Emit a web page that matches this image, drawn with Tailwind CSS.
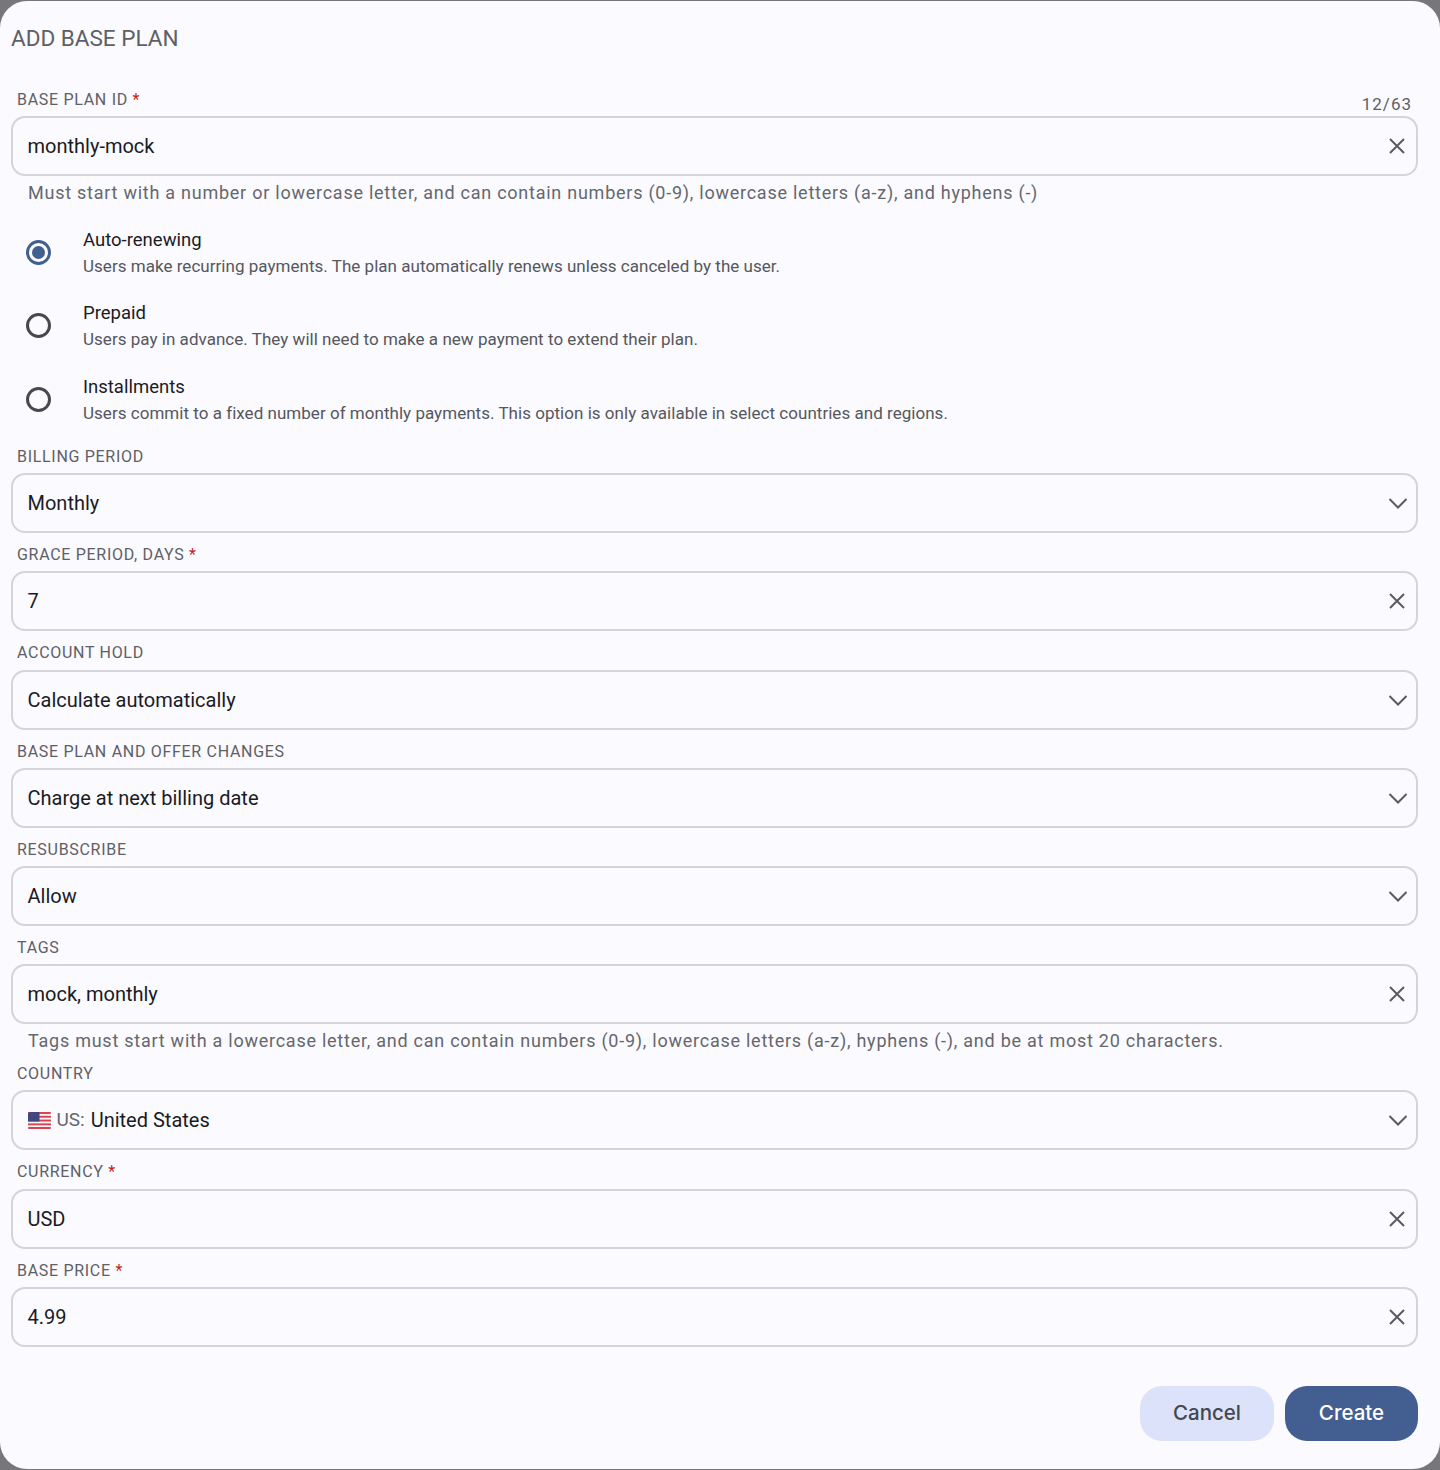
<!DOCTYPE html>
<html><head><meta charset="utf-8"><script src="https://cdn.jsdelivr.net/npm/@tailwindcss/browser@4"></script></head>
<body class="m-0 bg-[#77777b]">
<div class="w-[1440px] h-[1470px] pt-[1px] font-['Roboto',sans-serif]">
<div class="h-[1468px] bg-[#fafaff] rounded-[27px] pl-[11px] pr-[22px] flex flex-col">
  <div class="h-[72px] pt-[21px] text-[22.5px] leading-[32px] text-[#5f6065]">ADD BASE PLAN</div>

  <div class="h-[43px] flex items-end justify-between pl-[6px] pb-[6px] text-[16px] leading-[20px] tracking-[0.7px] text-[#5f6065]">
    <div>BASE PLAN ID <span class="text-[#c5221f]">*</span></div>
    <div class="pr-[6px] -mb-[4px] text-[17px] tracking-[1px]">12/63</div>
  </div>
  <div class="h-[60px] shrink-0 rounded-[14px] border-2 border-[#d3d4dc] pl-[14.5px] pr-[9px] flex items-center justify-between text-[20px] text-[#1b1b1f]">
    <span>monthly-mock</span>
    <svg class="w-[20px] h-[20px]" viewBox="0 0 20 20" fill="none" stroke="#5a5b60" stroke-width="2"><path d="M3 3l14 14M17 3L3 17"/></svg>
  </div>
  <div class="h-[33px] pl-[17px] pt-[5px] text-[18px] leading-[24px] tracking-[0.75px] text-[#66676c]">Must start with a number or lowercase letter, and can contain numbers (0-9), lowercase letters (a-z), and hyphens (-)</div>

  <div class="flex flex-col pt-[6.5px]">
    <div class="h-[73.5px] flex items-center pl-[15px]">
      <div class="w-[25px] h-[25px] rounded-full border-[3px] border-[#42608f] flex items-center justify-center shrink-0"><div class="w-[13px] h-[13px] rounded-full bg-[#42608f]"></div></div>
      <div class="ml-[32px]"><div class="text-[18.5px] leading-[28px] text-[#1b1b1f]">Auto-renewing</div><div class="text-[17px] leading-[25px] tracking-[0.03px] text-[#56575c]">Users make recurring payments. The plan automatically renews unless canceled by the user.</div></div>
    </div>
    <div class="h-[73.5px] flex items-center pl-[15px]">
      <div class="w-[25px] h-[25px] rounded-full border-[3px] border-[#47484d] shrink-0"></div>
      <div class="ml-[32px]"><div class="text-[18.5px] leading-[28px] text-[#1b1b1f]">Prepaid</div><div class="text-[17px] leading-[25px] tracking-[0.03px] text-[#56575c]">Users pay in advance. They will need to make a new payment to extend their plan.</div></div>
    </div>
    <div class="h-[73.5px] flex items-center pl-[15px]">
      <div class="w-[25px] h-[25px] rounded-full border-[3px] border-[#47484d] shrink-0"></div>
      <div class="ml-[32px]"><div class="text-[18.5px] leading-[28px] text-[#1b1b1f]">Installments</div><div class="text-[17px] leading-[25px] tracking-[0.03px] text-[#56575c]">Users commit to a fixed number of monthly payments. This option is only available in select countries and regions.</div></div>
    </div>
  </div>

  <div class="h-[37px] pl-[6px] pt-[11px] text-[16px] leading-[20px] tracking-[0.7px] text-[#5f6065]">BILLING PERIOD</div>
  <div class="h-[60px] shrink-0 rounded-[14px] border-2 border-[#d3d4dc] pl-[14.5px] pr-[8px] flex items-center justify-between text-[20px] text-[#1b1b1f]">
    <span>Monthly</span>
    <svg class="w-[20px] h-[12px]" viewBox="0 0 20 12" fill="none" stroke="#5a5b60" stroke-width="2"><path d="M1.5 2L10 10.5L18.5 2"/></svg>
  </div>

  <div class="h-[38.25px] pl-[6px] pt-[12px] text-[16px] leading-[20px] tracking-[0.7px] text-[#5f6065]">GRACE PERIOD, DAYS <span class="text-[#c5221f]">*</span></div>
  <div class="h-[60px] shrink-0 rounded-[14px] border-2 border-[#d3d4dc] pl-[14.5px] pr-[9px] flex items-center justify-between text-[20px] text-[#1b1b1f]">
    <span>7</span>
    <svg class="w-[20px] h-[20px]" viewBox="0 0 20 20" fill="none" stroke="#5a5b60" stroke-width="2"><path d="M3 3l14 14M17 3L3 17"/></svg>
  </div>

  <div class="h-[38.25px] pl-[6px] pt-[12px] text-[16px] leading-[20px] tracking-[0.7px] text-[#5f6065]">ACCOUNT HOLD</div>
  <div class="h-[60px] shrink-0 rounded-[14px] border-2 border-[#d3d4dc] pl-[14.5px] pr-[8px] flex items-center justify-between text-[20px] text-[#1b1b1f]">
    <span>Calculate automatically</span>
    <svg class="w-[20px] h-[12px]" viewBox="0 0 20 12" fill="none" stroke="#5a5b60" stroke-width="2"><path d="M1.5 2L10 10.5L18.5 2"/></svg>
  </div>

  <div class="h-[38.25px] pl-[6px] pt-[12px] text-[16px] leading-[20px] tracking-[0.7px] text-[#5f6065]">BASE PLAN AND OFFER CHANGES</div>
  <div class="h-[60px] shrink-0 rounded-[14px] border-2 border-[#d3d4dc] pl-[14.5px] pr-[8px] flex items-center justify-between text-[20px] text-[#1b1b1f]">
    <span>Charge at next billing date</span>
    <svg class="w-[20px] h-[12px]" viewBox="0 0 20 12" fill="none" stroke="#5a5b60" stroke-width="2"><path d="M1.5 2L10 10.5L18.5 2"/></svg>
  </div>

  <div class="h-[38.25px] pl-[6px] pt-[12px] text-[16px] leading-[20px] tracking-[0.7px] text-[#5f6065]">RESUBSCRIBE</div>
  <div class="h-[60px] shrink-0 rounded-[14px] border-2 border-[#d3d4dc] pl-[14.5px] pr-[8px] flex items-center justify-between text-[20px] text-[#1b1b1f]">
    <span>Allow</span>
    <svg class="w-[20px] h-[12px]" viewBox="0 0 20 12" fill="none" stroke="#5a5b60" stroke-width="2"><path d="M1.5 2L10 10.5L18.5 2"/></svg>
  </div>

  <div class="h-[38.25px] pl-[6px] pt-[12px] text-[16px] leading-[20px] tracking-[0.7px] text-[#5f6065]">TAGS</div>
  <div class="h-[60px] shrink-0 rounded-[14px] border-2 border-[#d3d4dc] pl-[14.5px] pr-[9px] flex items-center justify-between text-[20px] text-[#1b1b1f]">
    <span>mock, monthly</span>
    <svg class="w-[20px] h-[20px]" viewBox="0 0 20 20" fill="none" stroke="#5a5b60" stroke-width="2"><path d="M3 3l14 14M17 3L3 17"/></svg>
  </div>
  <div class="h-[33px] pl-[17px] pt-[5px] text-[18px] leading-[24px] tracking-[0.75px] text-[#66676c]">Tags must start with a lowercase letter, and can contain numbers (0-9), lowercase letters (a-z), hyphens (-), and be at most 20 characters.</div>

  <div class="h-[33px] pl-[6px] pt-[7px] text-[16px] leading-[20px] tracking-[0.7px] text-[#5f6065]">COUNTRY</div>
  <div class="h-[60px] shrink-0 rounded-[14px] border-2 border-[#d3d4dc] pl-[14.5px] pr-[8px] flex items-center justify-between text-[20px] text-[#1b1b1f]">
    <span class="flex items-center">
      <svg class="w-[23px] h-[17px] mr-[6px]" viewBox="0 0 23 17"><rect width="23" height="17" rx="2" fill="#f4f4f8"/><g fill="#d9434f"><rect width="23" height="1.9" rx="1"/><rect y="3.8" width="23" height="1.9"/><rect y="7.6" width="23" height="1.9"/><rect y="11.4" width="23" height="1.9"/><rect y="15.1" width="23" height="1.9" rx="1"/></g><path d="M2 0h9.5v9.5H0V2a2 2 0 0 1 2-2z" fill="#43477f"/></svg>
      <span class="text-[#66676c] text-[19px] mr-[6px]">US:</span>United States</span>
    <svg class="w-[20px] h-[12px]" viewBox="0 0 20 12" fill="none" stroke="#5a5b60" stroke-width="2"><path d="M1.5 2L10 10.5L18.5 2"/></svg>
  </div>

  <div class="h-[38.25px] pl-[6px] pt-[12px] text-[16px] leading-[20px] tracking-[0.7px] text-[#5f6065]">CURRENCY <span class="text-[#c5221f]">*</span></div>
  <div class="h-[60px] shrink-0 rounded-[14px] border-2 border-[#d3d4dc] pl-[14.5px] pr-[9px] flex items-center justify-between text-[20px] text-[#1b1b1f]">
    <span>USD</span>
    <svg class="w-[20px] h-[20px]" viewBox="0 0 20 20" fill="none" stroke="#5a5b60" stroke-width="2"><path d="M3 3l14 14M17 3L3 17"/></svg>
  </div>

  <div class="h-[38.25px] pl-[6px] pt-[12px] text-[16px] leading-[20px] tracking-[0.7px] text-[#5f6065]">BASE PRICE <span class="text-[#c5221f]">*</span></div>
  <div class="h-[60px] shrink-0 rounded-[14px] border-2 border-[#d3d4dc] pl-[14.5px] pr-[9px] flex items-center justify-between text-[20px] text-[#1b1b1f]">
    <span>4.99</span>
    <svg class="w-[20px] h-[20px]" viewBox="0 0 20 20" fill="none" stroke="#5a5b60" stroke-width="2"><path d="M3 3l14 14M17 3L3 17"/></svg>
  </div>

  <div class="flex justify-end gap-[11px] pt-[39px]">
    <button class="w-[134px] h-[55px] rounded-[22px] bg-[#dce2f9] text-[#44474e] text-[20.5px] font-medium font-['Inter',sans-serif]">Cancel</button>
    <button class="w-[133px] h-[55px] rounded-[22px] bg-[#435e91] text-white text-[20.5px] font-medium font-['Inter',sans-serif]">Create</button>
  </div>
</div>
</div>
</body></html>
